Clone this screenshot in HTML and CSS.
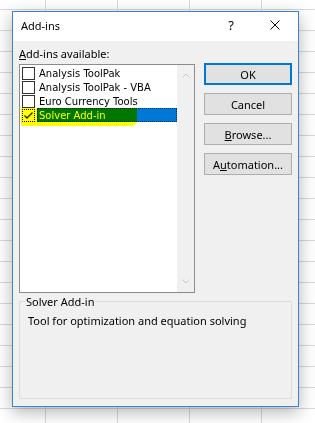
FILE: index.html
```html
<!DOCTYPE html>
<html>
<head>
<meta charset="utf-8">
<link rel="stylesheet" href="styles.css">
</head>
<body>
<div class="dialog">
  <div class="titlebar">
    <span class="title">Add-ins</span>
    <span class="help">?</span>
    <span class="close"><svg width="10" height="10" viewBox="0 0 10 10"><path d="M0.5 0.5L9.5 9.5M9.5 0.5L0.5 9.5" stroke="#000" stroke-width="1" fill="none"/></svg></span>
  </div>
  <div class="content">
    <div class="top">
      <div class="left">
        <div class="label"><u>A</u>dd-ins available:</div>
        <div class="listbox">
          <div class="items">
            <div class="item"><span class="check"></span><span class="text">Analysis ToolPak</span></div>
            <div class="item"><span class="check"></span><span class="text">Analysis ToolPak - VBA</span></div>
            <div class="item"><span class="check"></span><span class="text">Euro Currency Tools</span></div>
            <div class="item selected"><span class="check checked"><svg width="11" height="11" viewBox="0 0 11 11"><path d="M1.5 5.5L4 8L9.5 2.5" stroke="#222" stroke-width="1.3" fill="none"/></svg></span><span class="text">Solver Add-in</span></div>
          </div>
          <div class="scrollbar">
            <svg width="8" height="5" viewBox="0 0 8 5"><path d="M0.5 4.5L4 1L7.5 4.5" stroke="#c8c8c8" stroke-width="1" fill="none"/></svg>
            <svg width="8" height="5" viewBox="0 0 8 5"><path d="M0.5 0.5L4 4L7.5 0.5" stroke="#c8c8c8" stroke-width="1" fill="none"/></svg>
          </div>
          <div class="highlighter"></div>
        </div>
      </div>
      <div class="buttons">
        <button class="btn default">OK</button>
        <button class="btn">Cancel</button>
        <button class="btn"><u>B</u>rowse...</button>
        <button class="btn">A<u>u</u>tomation...</button>
      </div>
    </div>
    <fieldset class="group">
      <legend>Solver Add-in</legend>
      <p>Tool for optimization and equation solving</p>
    </fieldset>
  </div>
</div>
</body>
</html>
```
FILE: styles.css
```css
* { box-sizing: border-box; }
html, body { height: 100%; }
body {
  margin: 0;
  padding: 11px 0 0 12px;
  font-family: "Noto Sans", "Open Sans", sans-serif;
  font-size: 11px;
  color: #000;
  background-color: #fff;
  background-image:
    linear-gradient(to right, #d9d9d9 1px, transparent 1px),
    linear-gradient(to bottom, #d9d9d9 1px, transparent 1px);
  background-size: 72px 21px;
  background-position: 45px 9px;
}
.dialog {
  width: 287px;
  border: 1px solid #3a85cf;
  box-shadow: 0 5px 16px rgba(0, 0, 0, 0.3);
}
.titlebar {
  height: 29px;
  background: #fff;
  display: flex;
  align-items: center;
  padding: 0 0 3px 8px;
}
.title { flex: 1; line-height: 15px; }
.help { width: 42px; text-align: center; font-size: 13px; line-height: 15px; }
.close { width: 46px; display: flex; justify-content: center; }
.close svg { display: block; }
.content {
  height: 365px;
  background: #f0f0f0;
  padding: 5px 6px 7px;
  display: flex;
  flex-direction: column;
}
.top { display: flex; gap: 9px; }
.left { width: 176px; }
.label { line-height: 15px; margin-bottom: 3px; }
.listbox {
  position: relative;
  height: 229px;
  border: 1px solid #8c8c8c;
  background: #fff;
  display: flex;
}
.items { flex: 1; padding-top: 1px; }
.item {
  height: 14px;
  display: flex;
  align-items: flex-start;
  padding-left: 2px;
  font-family: "DejaVu Sans", Verdana, sans-serif;
  font-size: 10px;
  line-height: 14px;
}
.check {
  flex: none;
  width: 13px;
  height: 13px;
  margin-top: 1px;
  border: 1px solid #333;
  background: #fff;
  display: flex;
  align-items: center;
  justify-content: center;
}
.check.checked { border-style: dotted; border-color: #000; }
.check svg { display: block; }
.text { margin-left: 2px; padding: 1px 0 0 2px; height: 14px; line-height: 13px; white-space: nowrap; }
.selected .text {
  flex: 1;
  background: #0078d7;
  color: #fff;
  outline: 1px dotted #0a2f5a;
  outline-offset: -1px;
}
.scrollbar {
  width: 17px;
  background: #f0f0f0;
  display: flex;
  flex-direction: column;
  align-items: center;
  justify-content: space-between;
  padding: 8px 0;
}
.scrollbar svg { display: block; }
.highlighter {
  position: absolute;
  left: 1px;
  top: 43px;
  width: 116px;
  height: 18px;
  background: #ffff00;
  mix-blend-mode: multiply;
  border-radius: 0 0 6px 2px;
}
.buttons {
  width: 88px;
  margin-top: 17px;
  display: flex;
  flex-direction: column;
  gap: 8px;
}
.btn {
  height: 22px;
  border: 1px solid #adadad;
  background: #e1e1e1;
  font: inherit;
  color: #000;
  padding: 0;
  line-height: 15px;
}
.btn.default { border: 2px solid #0078d7; }
.group {
  flex: 1;
  margin: 1px 0 0;
  border: 1px solid #dcdcdc;
  padding: 0 8px;
  min-width: 0;
}
.group legend { margin-left: -3px; padding: 0 1px; line-height: 15px; }
.group p { margin: 4px 0 0; line-height: 15px; }
```
